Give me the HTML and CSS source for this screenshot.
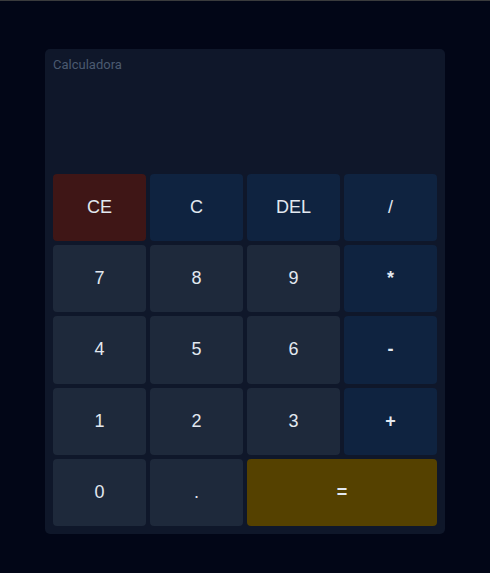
FILE: index.html
```html
<!DOCTYPE html>
<html lang="pt">
<head>
<meta charset="utf-8">
<title>Calculadora</title>
<link rel="stylesheet" href="styles.css">
</head>
<body>
<main class="calc">
  <div class="display">
    <span class="label">Calculadora</span>
  </div>
  <div class="keys">
    <button class="key danger">CE</button>
    <button class="key op">C</button>
    <button class="key op">DEL</button>
    <button class="key op">/</button>
    <button class="key">7</button>
    <button class="key">8</button>
    <button class="key">9</button>
    <button class="key op bold">*</button>
    <button class="key">4</button>
    <button class="key">5</button>
    <button class="key">6</button>
    <button class="key op bold">-</button>
    <button class="key">1</button>
    <button class="key">2</button>
    <button class="key">3</button>
    <button class="key op bold">+</button>
    <button class="key">0</button>
    <button class="key">.</button>
    <button class="key equals bold">=</button>
  </div>
</main>
</body>
</html>
```

FILE: styles.css
```css
html, body {
  margin: 0;
  padding: 0;
}
body {
  background: #020617;
  border-top: 1px solid #3a3b3d;
  min-height: 572px;
  box-sizing: border-box;
  padding-top: 48px;
  display: flex;
  justify-content: center;
  align-items: flex-start;
}
.calc {
  width: 400px;
  box-sizing: border-box;
  padding: 8px;
  background: #0f172a;
  border-radius: 5px;
  display: flex;
  flex-direction: column;
}
.display {
  height: 117px;
  box-sizing: border-box;
}
.label {
  display: block;
  font-family: Roboto, "Liberation Sans", sans-serif;
  font-size: 13px;
  line-height: 16px;
  color: #4b5a70;
}
.keys {
  display: grid;
  grid-template-columns: repeat(4, 1fr);
  grid-auto-rows: 67.2px;
  gap: 4px;
}
.key {
  border: none;
  margin: 0;
  padding: 0;
  border-radius: 4px;
  background: #1e293b;
  color: #e2e8f0;
  font-family: "Liberation Sans", Arial, sans-serif;
  font-size: 18px;
  cursor: pointer;
}
.key.bold {
  font-weight: 700;
}
.key.op {
  background: #0f2340;
}
.key.danger {
  background: #3f1616;
}
.key.equals {
  background: #554100;
  grid-column: span 2;
}
```
